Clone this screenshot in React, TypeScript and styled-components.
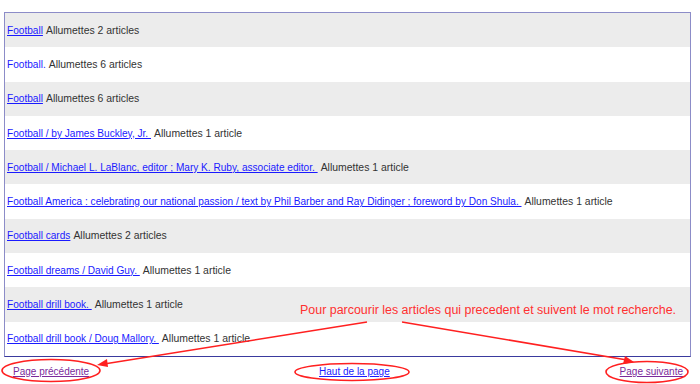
import React from "react";
import styled, { createGlobalStyle } from "styled-components";

const Global = createGlobalStyle`
  html, body { margin: 0; padding: 0; background: #ffffff; }
  body { font-family: "Liberation Sans", Arial, sans-serif; width: 700px; height: 384px; overflow: hidden; }
`;

const Page = styled.div`
  position: relative;
  width: 700px;
  height: 384px;
  padding: 12px 0 0 4px;
  box-sizing: border-box;
`;

const ResultBox = styled.div`
  width: 687px;
  box-sizing: border-box;
  border: 1px solid #8c8cc8;
  border-bottom-color: #3a3a9e;
  display: flex;
  flex-direction: column;
`;

const Row = styled.div<{ $shaded: boolean }>`
  height: 34.3px;
  display: flex;
  align-items: center;
  padding-left: 2px;
  background: ${(p) => (p.$shaded ? "#ececec" : "#ffffff")};
  color: #333333;
  white-space: nowrap;
`;

const TitleLink = styled.a<{ $plain?: boolean }>`
  font-size: 10.1px;
  color: #1a1aff;
  text-decoration: ${(p) => (p.$plain ? "none" : "underline")};
  white-space: pre;
`;

const Count = styled.span`
  font-size: 10.45px;
  margin-left: 3px;
  color: #333333;
`;

const Footer = styled.div`
  width: 687px;
  display: flex;
  justify-content: space-between;
  padding: 9px 8px 0 9px;
  box-sizing: border-box;
  font-size: 10px;
`;

const NavLink = styled.a<{ $visited?: boolean }>`
  color: ${(p) => (p.$visited ? "#7b2a9b" : "#1a1aff")};
  text-decoration: underline;
`;

const Annotation = styled.div`
  position: absolute;
  left: 300px;
  top: 303px;
  font-size: 12.45px;
  color: #ff3030;
  white-space: nowrap;
`;

const Overlay = styled.svg`
  position: absolute;
  left: 0;
  top: 0;
  pointer-events: none;
`;

const rows: { title: string; count: string; plain?: boolean }[] = [
  { title: "Football", count: "Allumettes 2 articles" },
  { title: "Football.", count: "Allumettes 6 articles", plain: true },
  { title: "Football", count: "Allumettes 6 articles" },
  { title: "Football / by James Buckley, Jr. ", count: "Allumettes 1 article" },
  { title: "Football / Michael L. LaBlanc, editor ; Mary K. Ruby, associate editor. ", count: "Allumettes 1 article" },
  {
    title:
      "Football America : celebrating our national passion / text by Phil Barber and Ray Didinger ; foreword by Don Shula. ",
    count: "Allumettes 1 article",
  },
  { title: "Football cards", count: "Allumettes 2 articles" },
  { title: "Football dreams / David Guy. ", count: "Allumettes 1 article" },
  { title: "Football drill book. ", count: "Allumettes 1 article" },
  { title: "Football drill book / Doug Mallory. ", count: "Allumettes 1 article" },
];

export default function App() {
  return (
    <Page>
      <Global />
      <ResultBox>
        {rows.map((r, i) => (
          <Row key={i} $shaded={i % 2 === 0}>
            <TitleLink href="#" $plain={r.plain}>
              {r.title}
            </TitleLink>
            <Count>{r.count}</Count>
          </Row>
        ))}
      </ResultBox>
      <Footer>
        <NavLink href="#" $visited>
          Page précédente
        </NavLink>
        <NavLink href="#">Haut de la page</NavLink>
        <NavLink href="#" $visited>
          Page suivante
        </NavLink>
      </Footer>
      <Annotation>Pour parcourir les articles qui precedent et suivent le mot recherche.</Annotation>
      <Overlay width="700" height="384" viewBox="0 0 700 384">
        <g stroke="#ff2020" strokeWidth="1.6" fill="none">
          <ellipse cx="51" cy="370.5" rx="49" ry="11" />
          <ellipse cx="352" cy="372" rx="57" ry="8.5" />
          <ellipse cx="647" cy="372" rx="41" ry="10.5" />
          <line x1="367" y1="322" x2="104" y2="364" />
          <line x1="402" y1="322" x2="627" y2="360" />
        </g>
        <g fill="#ff2020">
          <polygon points="97,365 107,359 108,367" />
          <polygon points="634,362 623,364 625,356" />
        </g>
      </Overlay>
    </Page>
  );
}
